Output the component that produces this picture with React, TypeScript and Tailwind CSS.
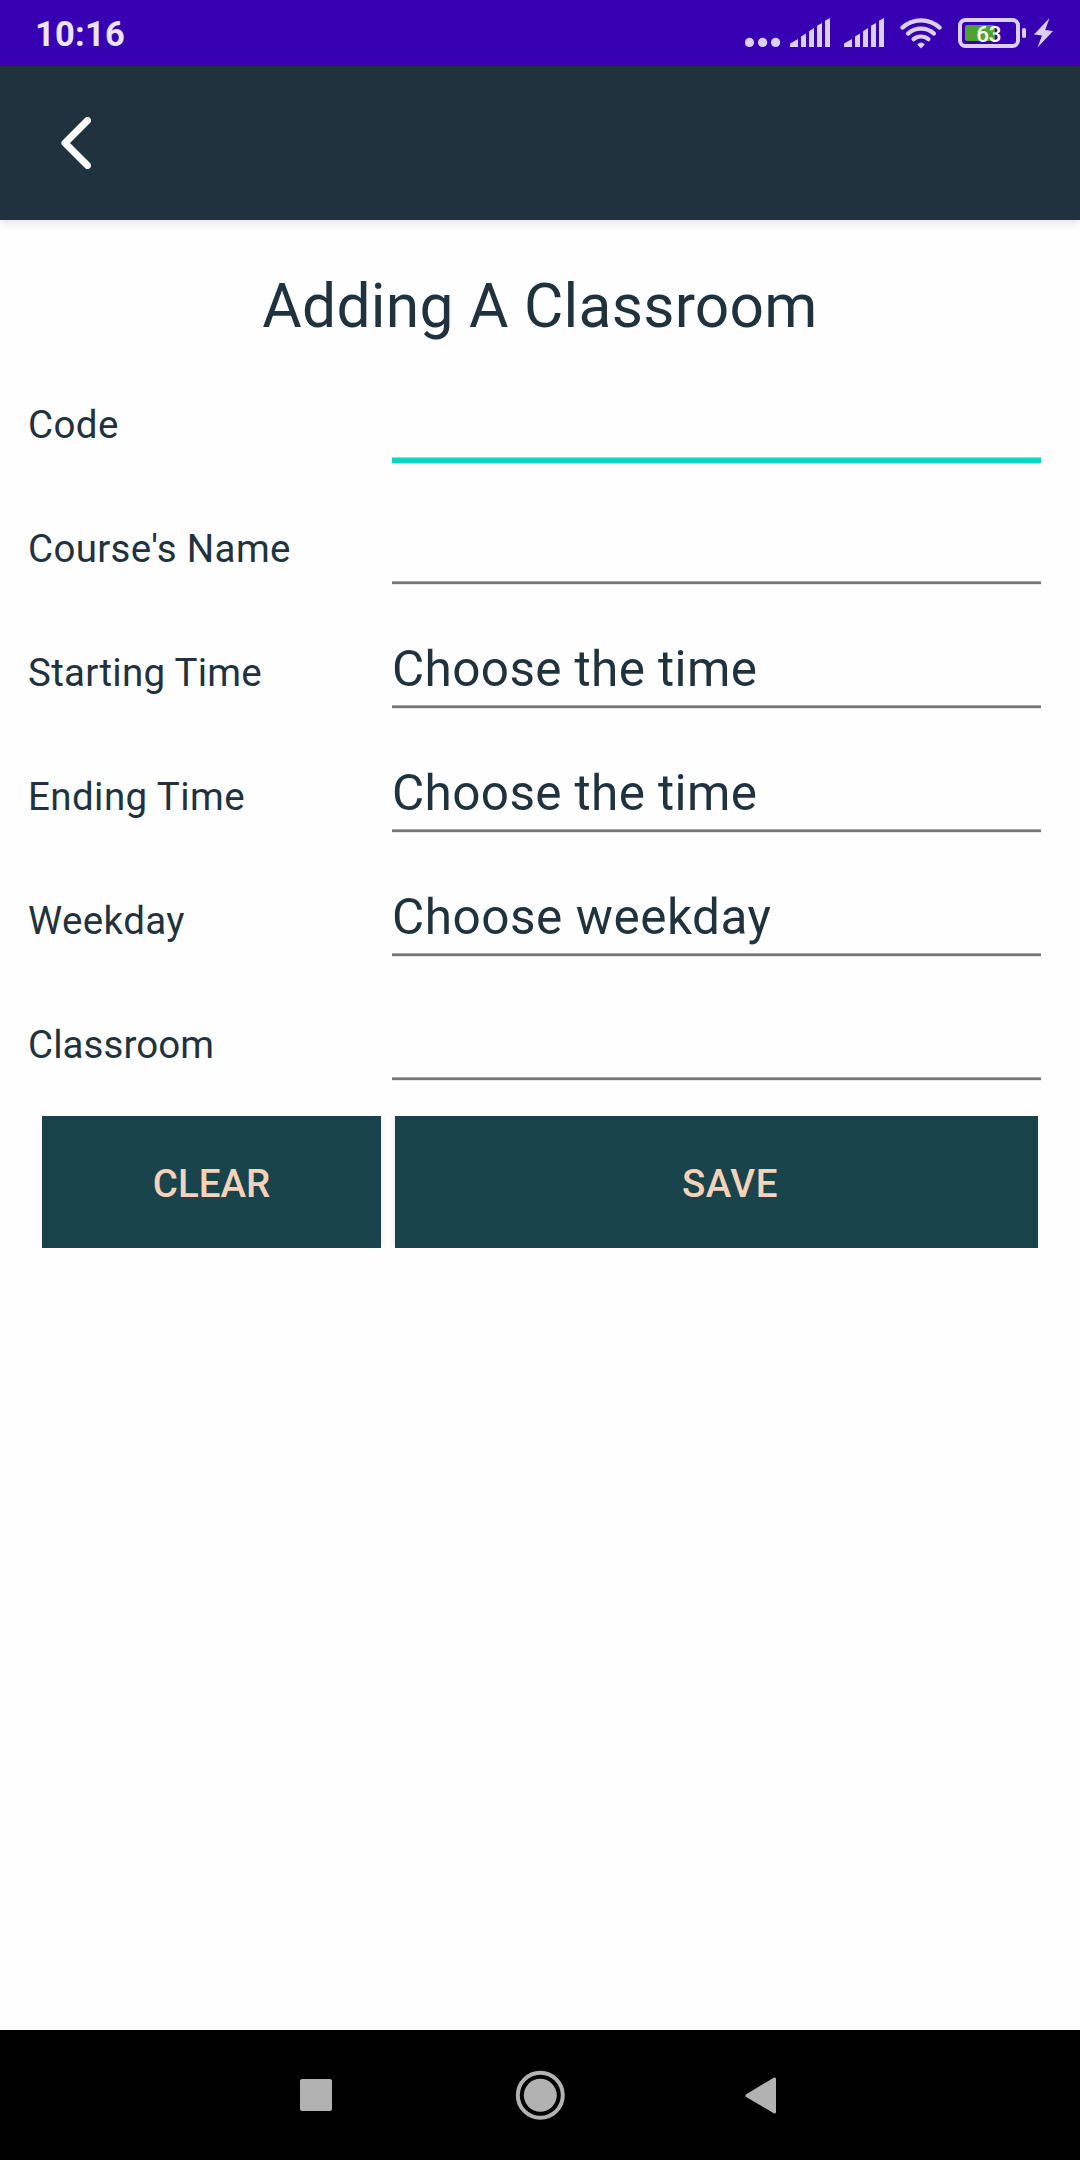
const fields = [
  { label: "Code", labelTracking: "tracking-[0.4px]", value: "", valueTracking: "", focused: true },
  { label: "Course's Name", labelTracking: "tracking-[0.32px]", value: "", valueTracking: "", focused: false },
  { label: "Starting Time", labelTracking: "tracking-[0.27px]", value: "Choose the time", valueTracking: "tracking-[0.36px]", focused: false },
  { label: "Ending Time", labelTracking: "tracking-[0.42px]", value: "Choose the time", valueTracking: "tracking-[0.36px]", focused: false },
  { label: "Weekday", labelTracking: "tracking-[0.4px]", value: "Choose weekday", valueTracking: "tracking-[0.52px]", focused: false },
  { label: "Classroom", labelTracking: "tracking-[0.08px]", value: "", valueTracking: "", focused: false },
];

function Signal() {
  return (
    <svg className="h-[30px] w-[40px]" viewBox="0 0 40 30" fill="#dccff4">
      <path d="M0 29V25.5L8 21V29ZM11 29V18.5L16 15.5V29ZM19 29V13.2L24 10V29ZM27 29V7.8L32 5V29ZM35 29V2.8L40 0V29Z" />
    </svg>
  );
}

function StatusBar() {
  return (
    <header className="flex h-[66px] items-start justify-between bg-[#3700b3] pr-[27px] pl-[35px]">
      <span className="pt-[9px] text-[34.5px] leading-[50px] font-bold tracking-[0.2px] text-[#ece3fa]">10:16</span>
      <div className="flex pt-[18px]">
        <svg className="h-[30px] w-[36px]" viewBox="0 0 36 30" fill="#dccff4">
          <circle cx="4.5" cy="24.4" r="4.6" />
          <circle cx="17.6" cy="24.4" r="4.6" />
          <circle cx="30.6" cy="24.4" r="4.6" />
        </svg>
        <div className="ml-[9px] flex gap-[14px]">
          <Signal />
          <Signal />
        </div>
        <svg className="ml-[16px] h-[31px] w-[42px]" viewBox="0 0 42 31" fill="none" stroke="#dccff4" strokeWidth="4.2" strokeLinecap="round">
          <path d="M2.4 9.6A27.5 27.5 0 0 1 39.6 9.6" />
          <path d="M8 15.6A19.5 19.5 0 0 1 34 15.6" />
          <path d="M13.6 21.2A11.5 11.5 0 0 1 28.4 21.2" />
          <path d="M21 30.5L17.2 26.6Q21 22.4 24.8 26.6Z" fill="#dccff4" stroke="none" />
        </svg>
        <svg className="ml-[16px] h-[30px] w-[68px]" viewBox="0 0 68 30">
          <rect x="2" y="2" width="58" height="26" rx="5.5" fill="none" stroke="#dccff4" strokeWidth="4" />
          <rect x="64" y="10" width="4" height="10" rx="1.8" fill="#dccff4" />
          <rect x="7" y="7" width="30" height="16" rx="2" fill="#4fa22f" />
          <text x="30.8" y="23.6" textAnchor="middle" fontFamily="Roboto" fontSize="22.5" fontWeight="500" letterSpacing="-0.3" fill="#fff">
            63
          </text>
        </svg>
        <svg className="ml-[8px] h-[30px] w-[19px]" viewBox="0 0 19 30" fill="#dccff4">
          <path d="M15.5 0L0 16.5L8 17.5L3.5 29.5L19 13L11.2 12Z" />
        </svg>
      </div>
    </header>
  );
}

function NavBar() {
  return (
    <nav className="flex h-[130px] items-center bg-black pl-[300px]">
      <div className="h-8 w-8 rounded-[2px] bg-[#b2b2b2]" />
      <svg className="ml-[183px] h-[50px] w-[50px]" viewBox="0 0 50 50">
        <circle cx="25.3" cy="25.3" r="22.5" fill="none" stroke="#b2b2b2" strokeWidth="4" />
        <circle cx="25.3" cy="25.3" r="16.5" fill="#b2b2b2" />
      </svg>
      <svg className="ml-[180px] h-[38px] w-[31px]" viewBox="0 0 31 38">
        <path d="M2 19.6L29.5 3V36Z" fill="#b2b2b2" stroke="#b2b2b2" strokeWidth="3" strokeLinejoin="round" />
      </svg>
    </nav>
  );
}

export default function App() {
  return (
    <div className="flex h-[2160px] w-[1080px] flex-col bg-[#fefefe] font-[Roboto,sans-serif] text-[#1f323e]">
      <StatusBar />
      <div className="flex h-[154px] shrink-0 items-center bg-[#1f323e] pl-[61px] shadow-[0_2px_9px_rgba(0,0,0,0.14)]">
        <button aria-label="Back">
          <svg className="h-[52px] w-[30px]" viewBox="0 0 30 52" fill="none" stroke="#fff" strokeWidth="7" strokeLinecap="round" strokeLinejoin="round">
            <path d="M26.5 3.5L4 26L26.5 48.5" />
          </svg>
        </button>
      </div>
      <main className="flex-1">
        <h1 className="h-[156px] pt-[37px] text-center text-[60.5px] leading-[100px] tracking-[0.26px]">Adding A Classroom</h1>
        <form className="pr-[39px] pl-7">
          <div className="grid gap-[39px]">
            {fields.map((field) => (
              <div key={field.label} className="flex h-[85px]">
                <label className={`w-[364px] text-[38.5px] leading-[98px] ${field.labelTracking}`}>{field.label}</label>
                <div className="flex-1">
                  <div className={`h-[81px] text-[49.5px] leading-[90px] ${field.valueTracking}`}>{field.value}</div>
                  {field.focused ? (
                    <div className="h-[7px] border-t border-b border-t-[#7fe9de] border-b-[#c9f6f1] bg-[#0fd6c4]" />
                  ) : (
                    <div className="h-[4px] border-t border-b border-t-[#a8a8a8] border-b-[#e6e6e6] bg-[#757575]" />
                  )}
                </div>
              </div>
            ))}
          </div>
          <div className="mt-[35px] mr-[3px] ml-[14px] flex h-[132px] gap-[14px] text-[38.5px] font-medium text-[#f5d2b8]">
            <button type="button" className="w-[339px] bg-[#1a444c] pt-[3px] shadow-[0_0_6px_rgba(0,0,0,0.12)] [clip-path:inset(0_-7px_0_0)]">
              CLEAR
            </button>
            <button type="button" className="flex-1 bg-[#1a444c] pt-[3px] pl-[27px] tracking-[0.5px] shadow-[0_0_6px_rgba(0,0,0,0.12)] [clip-path:inset(0_0_0_-7px)]">
              SAVE
            </button>
          </div>
        </form>
      </main>
      <NavBar />
    </div>
  );
}
